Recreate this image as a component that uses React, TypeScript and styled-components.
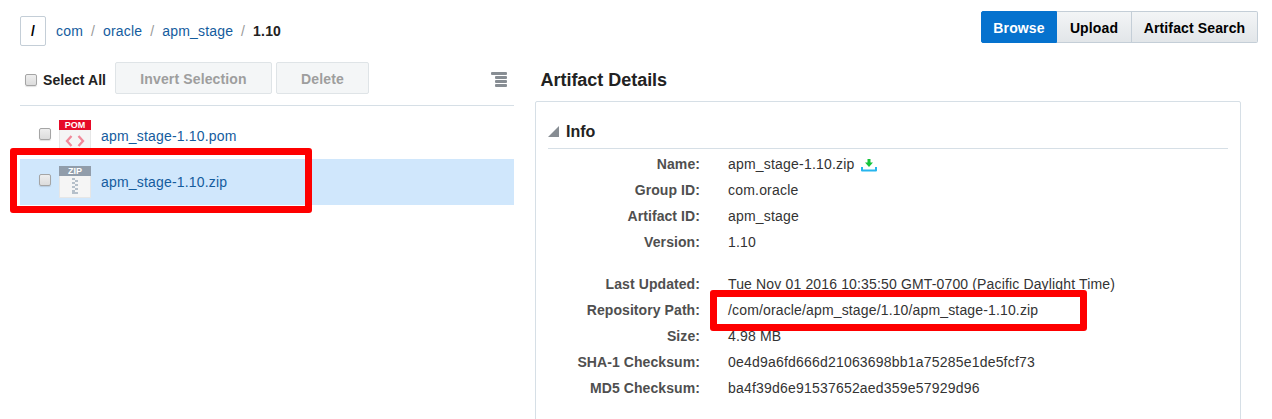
import React from 'react';
import styled, { createGlobalStyle } from 'styled-components';

const GlobalStyle = createGlobalStyle`
  * { box-sizing: border-box; }
  body {
    margin: 0;
    background: #fff;
    overflow: hidden;
    font: 14px/20px "Liberation Sans", Arial, sans-serif;
    letter-spacing: 0.18px;
    color: #333;
  }
`;

const Page = styled.div`
  position: relative;
  height: 419px;
  overflow: hidden;
  display: flex;
  flex-direction: column;
`;

const TopBar = styled.header`
  height: 62px;
  flex: none;
  display: flex;
  justify-content: space-between;
  align-items: flex-start;
  padding: 11px 14px 0 20px;
`;

const Breadcrumbs = styled.nav`
  display: flex;
  align-items: center;
  padding-top: 5px;
`;

const RootButton = styled.button`
  width: 26px;
  height: 30px;
  margin-right: 10px;
  padding: 0;
  border: 1px solid #c4ced7;
  border-radius: 2px;
  background: #fff;
  font: bold 14px "Liberation Sans", Arial, sans-serif;
  color: #000;
`;

const Crumb = styled.a`
  color: #145c9e;
`;

const Slash = styled.span`
  width: 20px;
  text-align: center;
  color: #999;
`;

const Current = styled.strong`
  color: #222;
`;

const ButtonGroup = styled.div`
  display: flex;
`;

const NavButton = styled.button<{ $active?: boolean; $width: number }>`
  width: ${(p) => p.$width}px;
  height: 32px;
  padding: 2px 0 0;
  border: 1px solid ${(p) => (p.$active ? '#0572ce' : '#c4ced7')};
  border-left-width: ${(p) => (p.$active ? 1 : 0)}px;
  background: ${(p) => (p.$active ? '#0572ce' : 'linear-gradient(#f3f5f6, #e2e6e9)')};
  color: ${(p) => (p.$active ? '#fff' : '#000')};
  font: bold 14px "Liberation Sans", Arial, sans-serif;
  letter-spacing: 0.13px;
  white-space: nowrap;
  &:first-child { border-radius: 2px 0 0 2px; }
  &:last-child { border-radius: 0 2px 2px 0; }
`;

const Columns = styled.main`
  display: flex;
  flex: 1;
  align-items: flex-start;
`;

const Browser = styled.section`
  width: 494px;
  margin-left: 20px;
`;

const Toolbar = styled.div`
  display: flex;
  height: 44px;
  padding-left: 5px;
  border-bottom: 1px solid #d6dfe6;
`;

const Checkbox = styled.span`
  flex: none;
  width: 12px;
  height: 12px;
  border: 1px solid #a5a5a5;
  border-radius: 2px;
  background: linear-gradient(#eee, #dcdcdc);
  box-shadow: 0 1px 1px rgba(0, 0, 0, 0.12);
`;

const SelectAll = styled.label`
  display: flex;
  align-items: center;
  gap: 6px;
  width: 90px;
  height: 36px;
  color: #222;
  font-weight: bold;
  letter-spacing: 0.05px;
  white-space: nowrap;
`;

const ToolButton = styled.button<{ $width: number }>`
  width: ${(p) => p.$width}px;
  height: 32px;
  margin-right: 4px;
  padding: 2px 0 0;
  border: 1px solid #dfe4e7;
  border-radius: 2px;
  background: #f4f6f7;
  color: #9e9e9e;
  font: bold 14px "Liberation Sans", Arial, sans-serif;
  letter-spacing: 0.13px;
`;

const ListIcon = styled.svg`
  margin: 10px 7px 0 auto;
`;

const FileList = styled.div`
  padding-top: 7px;
`;

const FileRow = styled.div<{ $selected?: boolean }>`
  display: flex;
  height: 46px;
  padding: 7px 0 0 19px;
  background: ${(p) => (p.$selected ? '#d0e7fc' : '#fff')};

  ${Checkbox} {
    margin: 8px 8px 0 0;
  }
`;

const FileIcon = styled.div`
  width: 32px;
  height: 32px;
  border: 1px solid #e6e6e6;
  border-top: 0;
  background: #f5f5f5;
`;

const FileKind = styled.div<{ $color: string }>`
  height: 10px;
  margin: 0 -1px;
  background: ${(p) => p.$color};
  color: #fff;
  font-size: 9px;
  line-height: 10px;
  font-weight: bold;
  text-align: center;
  letter-spacing: 0;
`;

const FileName = styled.a`
  margin: 6px 0 0 10px;
  color: #145c9e;
`;

const Details = styled.section`
  width: 706px;
  margin-left: 21px;
`;

const Title = styled.h1`
  height: 39px;
  margin: 0;
  padding: 7px 0 0 5.5px;
  font-size: 18px;
  line-height: 22px;
  letter-spacing: -0.03px;
  color: #222;
`;

const Panel = styled.div`
  height: 330px;
  padding: 18px 12px 0;
  border: 1px solid #d6dfe6;
  border-radius: 2px;
`;

const InfoHeading = styled.h2`
  display: flex;
  align-items: center;
  gap: 7px;
  height: 29px;
  margin: 0 0 2px;
  padding-bottom: 5px;
  border-bottom: 1px solid #d6dfe6;
  font-size: 16px;
  letter-spacing: 0;
  color: #222;
`;

const Fields = styled.dl`
  display: grid;
  grid-template-columns: 152px 1fr;
  column-gap: 28px;
  grid-auto-rows: 26px;
  margin: 0 0 16px;
  line-height: 26px;
`;

const Label = styled.dt`
  color: #4f4f4f;
  font-weight: bold;
  text-align: right;
  letter-spacing: 0.08px;
  white-space: nowrap;
`;

const Value = styled.dd<{ $tight?: boolean }>`
  display: flex;
  align-items: center;
  margin: 0;
  letter-spacing: ${(p) => (p.$tight ? 0.15 : 0.2)}px;
  white-space: nowrap;
`;

const DownloadIcon = styled.svg`
  margin: 2px 0 0 6px;
`;

const Highlight = styled.div<{ $x: number; $y: number; $w: number; $h: number }>`
  position: absolute;
  left: ${(p) => p.$x}px;
  top: ${(p) => p.$y}px;
  width: ${(p) => p.$w}px;
  height: ${(p) => p.$h}px;
  border: 7px solid #fe0000;
  border-radius: 3px;
  pointer-events: none;
`;

const identity = [
  ['Name:', 'apm_stage-1.10.zip'],
  ['Group ID:', 'com.oracle'],
  ['Artifact ID:', 'apm_stage'],
  ['Version:', '1.10'],
];

const storage = [
  ['Last Updated:', 'Tue Nov 01 2016 10:35:50 GMT-0700 (Pacific Daylight Time)'],
  ['Repository Path:', '/com/oracle/apm_stage/1.10/apm_stage-1.10.zip'],
  ['Size:', '4.98 MB'],
  ['SHA-1 Checksum:', '0e4d9a6fd666d21063698bb1a75285e1de5fcf73'],
  ['MD5 Checksum:', 'ba4f39d6e91537652aed359e57929d96'],
];

export default function App() {
  return (
    <>
      <GlobalStyle />
      <Page>
        <TopBar>
          <Breadcrumbs>
            <RootButton>/</RootButton>
            <Crumb>com</Crumb>
            <Slash>/</Slash>
            <Crumb>oracle</Crumb>
            <Slash>/</Slash>
            <Crumb>apm_stage</Crumb>
            <Slash>/</Slash>
            <Current>1.10</Current>
          </Breadcrumbs>
          <ButtonGroup>
            <NavButton $active $width={76}>Browse</NavButton>
            <NavButton $width={75}>Upload</NavButton>
            <NavButton $width={126}>Artifact Search</NavButton>
          </ButtonGroup>
        </TopBar>
        <Columns>
          <Browser>
            <Toolbar>
              <SelectAll>
                <Checkbox />
                Select All
              </SelectAll>
              <ToolButton $width={157}>Invert Selection</ToolButton>
              <ToolButton $width={93}>Delete</ToolButton>
              <ListIcon width="16" height="15" fill="#878d93">
                <rect x="0" y="0" width="16" height="3" rx="1" />
                <rect x="4" y="4" width="12" height="3" rx="1" />
                <rect x="4" y="8" width="12" height="3" rx="1" />
                <rect x="4" y="12" width="12" height="3" rx="1" />
              </ListIcon>
            </Toolbar>
            <FileList>
              <FileRow>
                <Checkbox />
                <FileIcon>
                  <FileKind $color="#e60a28">POM</FileKind>
                  <svg width="30" height="21" fill="none" stroke="#f0899a" strokeWidth="2.3">
                    <path d="M11.500 6 7 11l4.500 5M18.500 6 23 11l-4.500 5" />
                  </svg>
                </FileIcon>
                <FileName>apm_stage-1.10.pom</FileName>
              </FileRow>
              <FileRow $selected>
                <Checkbox />
                <FileIcon>
                  <FileKind $color="#919dab">ZIP</FileKind>
                  <svg width="30" height="21" fill="#b6c0ca" shapeRendering="crispEdges">
                    <path d="M12 2h3v2h-3zM15 4h3v2h-3zM12 6h3v2h-3zM15 8h3v2h-3zM12 10h3v2h-3zM15 12h3v2h-3zM12 14h3v2h3v2h-6z" />
                  </svg>
                </FileIcon>
                <FileName>apm_stage-1.10.zip</FileName>
              </FileRow>
            </FileList>
          </Browser>
          <Details>
            <Title>Artifact Details</Title>
            <Panel>
              <InfoHeading>
                <svg width="11" height="11"><path d="M11 0V11H0Z" fill="#878d93" /></svg>
                Info
              </InfoHeading>
              <Fields>
                {identity.map(([label, value], i) => (
                  <React.Fragment key={label}>
                    <Label>{label}</Label>
                    <Value>
                      {value}
                      {i === 0 && (
                        <DownloadIcon width="16" height="14">
                          <path d="M1 9v3.500h14V9" fill="none" stroke="#27b5ee" strokeWidth="2" strokeLinejoin="round" />
                          <path d="M6.500 1h3v3.500H12L8 9 4 4.500h2.500z" fill="#16c43c" />
                        </DownloadIcon>
                      )}
                    </Value>
                  </React.Fragment>
                ))}
              </Fields>
              <Fields>
                {storage.map(([label, value], i) => (
                  <React.Fragment key={label}>
                    <Label>{label}</Label>
                    <Value $tight={i < 3}>{value}</Value>
                  </React.Fragment>
                ))}
              </Fields>
            </Panel>
          </Details>
        </Columns>
        <Highlight $x={9.5} $y={148} $w={302} $h={65} />
        <Highlight $x={709.5} $y={290} $w={377} $h={41} />
      </Page>
    </>
  );
}
